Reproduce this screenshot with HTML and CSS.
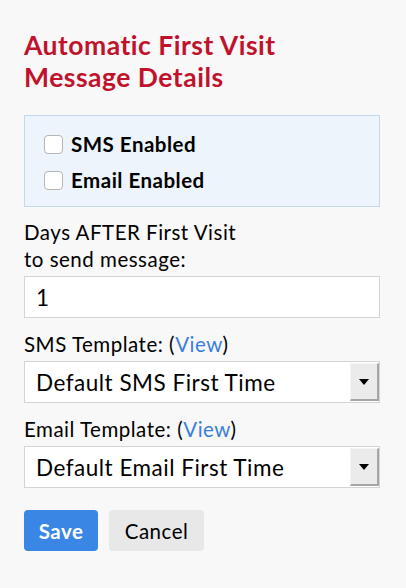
FILE: index.html
```html
<!DOCTYPE html>
<html>
<head>
<meta charset="utf-8">
<link rel="stylesheet" href="styles.css">
</head>
<body>
<div class="panel">
  <h1 class="title">Automatic First Visit Message Details</h1>
  <div class="checks">
    <label class="check"><input type="checkbox"><span>SMS Enabled</span></label>
    <label class="check"><input type="checkbox"><span>Email Enabled</span></label>
  </div>
  <label class="label label-days">Days AFTER First Visit<br>to send message:</label>
  <input class="text-input" type="text" value="1">
  <label class="label">SMS Template: (<a href="#" class="link">View</a>)</label>
  <div class="select">
    <span class="select-value">Default SMS First Time</span>
    <span class="select-btn"><span class="tri"></span></span>
  </div>
  <label class="label">Email Template: (<a href="#" class="link">View</a>)</label>
  <div class="select">
    <span class="select-value">Default Email First Time</span>
    <span class="select-btn"><span class="tri"></span></span>
  </div>
  <div class="actions">
    <button class="btn btn-save">Save</button>
    <button class="btn btn-cancel">Cancel</button>
  </div>
</div>
</body>
</html>
```

FILE: styles.css
```css
html, body {
  margin: 0;
  padding: 0;
  background: #f8f8f8;
}
body {
  font-family: Lato, "Open Sans", sans-serif;
  color: #111;
  letter-spacing: 0.5px;
}
.panel {
  padding: 29px 26px 0 24px;
  display: flex;
  flex-direction: column;
}
.title {
  margin: 0;
  font-size: 26.5px;
  line-height: 32px;
  font-weight: 700;
  color: #c1122c;
  width: 280px;
}
.checks {
  margin-top: 22px;
  background: #edf4fc;
  border: 1px solid #c3d9ee;
  padding: 14px 0 12px 19px;
  display: flex;
  flex-direction: column;
  gap: 8px;
}
.check {
  display: flex;
  align-items: center;
  font-size: 20.5px;
  font-weight: 700;
  line-height: 28px;
  color: #000;
}
.check input {
  appearance: none;
  -webkit-appearance: none;
  width: 19px;
  height: 19px;
  margin: 0 8px 0 0;
  border: 1px solid #b5b5b5;
  border-radius: 4px;
  background: #fff;
}
.label {
  display: block;
  font-size: 20.5px;
  line-height: 27px;
  margin-top: 13px;
  color: #000;
}
.label-days {
  margin-top: 12px;
}
.link {
  color: #3b7fdc;
  text-decoration: none;
}
.text-input {
  margin-top: 3px;
  height: 42px;
  box-sizing: border-box;
  border: 1px solid #d4d4d4;
  background: #fff;
  font-family: Lato, sans-serif;
  font-size: 22.5px;
  letter-spacing: 0.5px;
  padding: 0 11px;
  color: #000;
  outline: none;
}
.select {
  margin-top: 3px;
  height: 42px;
  box-sizing: border-box;
  border: 1px solid #d4d4d4;
  background: #fff;
  display: flex;
  align-items: center;
}
.select-value {
  flex: 1;
  font-size: 22.5px;
  padding-left: 11px;
  color: #000;
}
.select-btn {
  width: 29px;
  height: 38px;
  box-sizing: border-box;
  background: #ebebeb;
  border-top: 1px solid #f4f4f4;
  border-left: 1px solid #f4f4f4;
  border-right: 2px solid #a6a6a6;
  border-bottom: 2px solid #a6a6a6;
  display: flex;
  align-items: center;
  justify-content: center;
}
.tri {
  width: 0;
  height: 0;
  border-left: 5px solid transparent;
  border-right: 5px solid transparent;
  border-top: 6px solid #000;
}
.actions {
  margin-top: 22px;
  display: flex;
  gap: 11px;
}
.btn {
  height: 41px;
  border: none;
  border-radius: 4px;
  font-family: Lato, sans-serif;
  font-size: 20.5px;
  letter-spacing: 0.5px;
  padding: 0;
}
.btn-save {
  background: #3a86e4;
  color: #fff;
  font-weight: 700;
  width: 74px;
}
.btn-cancel {
  background: #e8e8e8;
  color: #000;
  width: 95px;
}
```
